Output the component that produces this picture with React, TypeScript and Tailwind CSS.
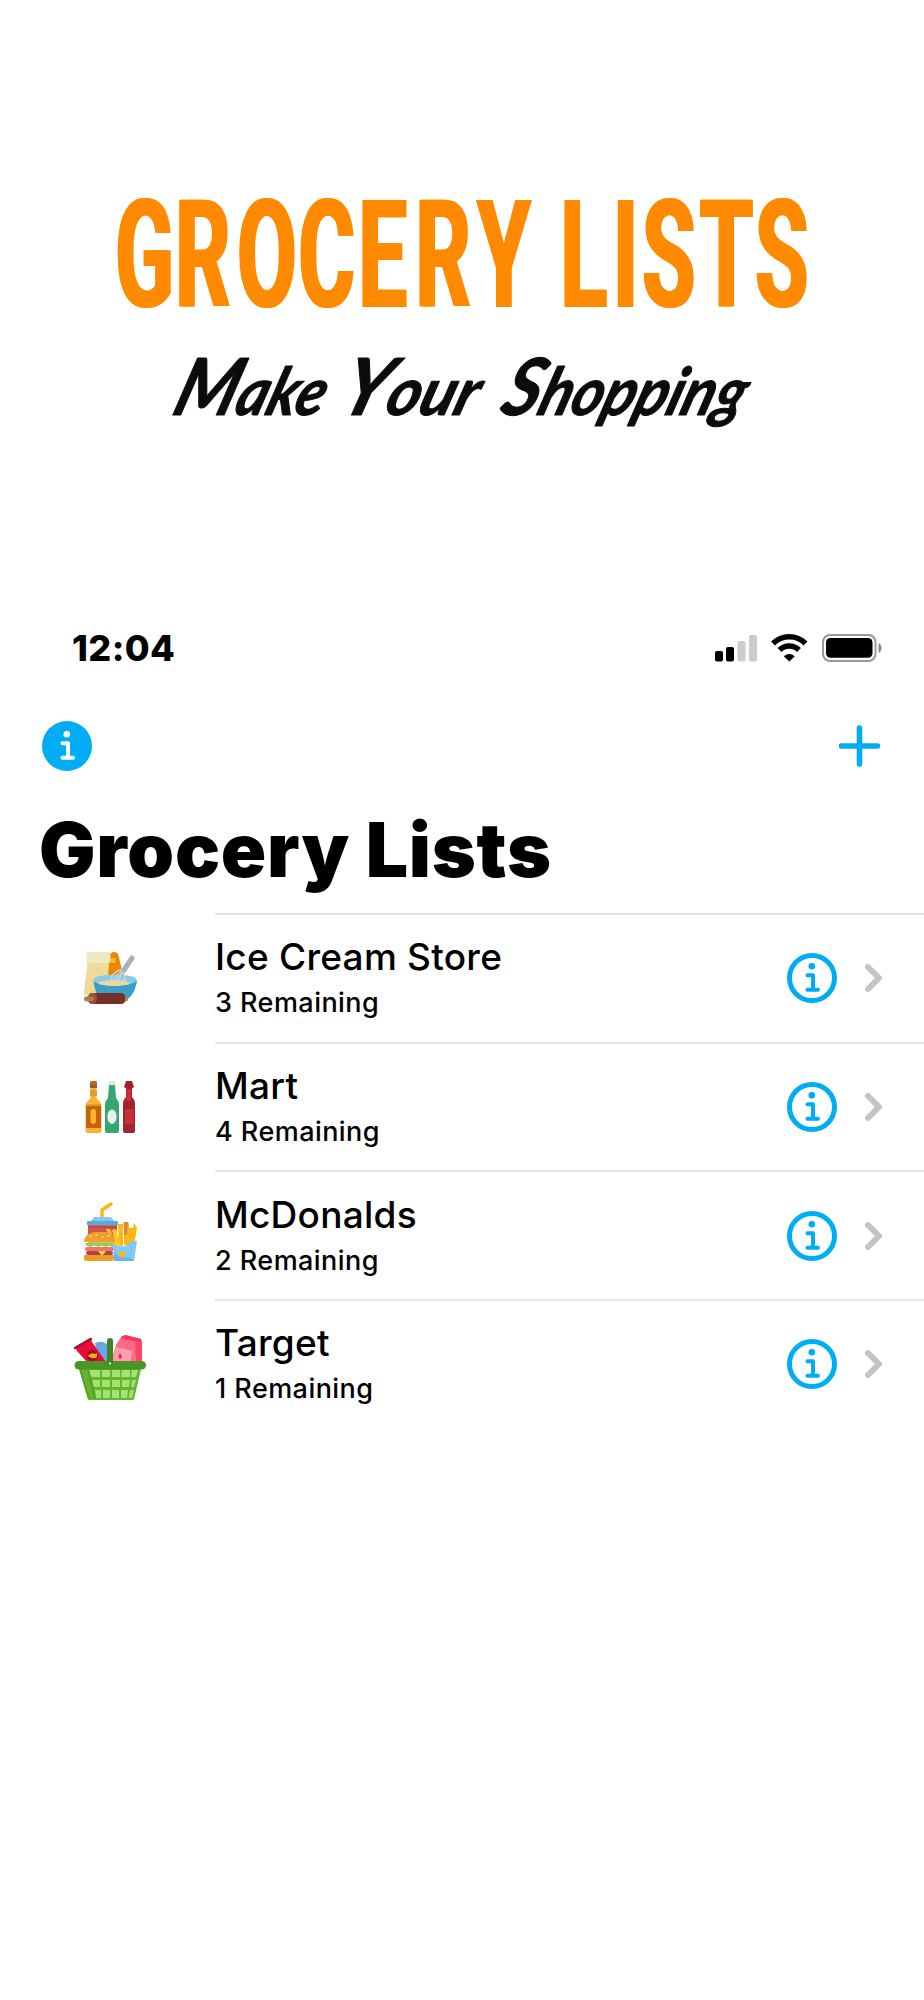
import type { ReactNode } from "react";

const BLUE = "#00adf5";

const BakingIcon = () => (
  <svg viewBox="0 0 100 100" className="w-[100px] h-[100px]">
    <path d="M50 24q4-4 8 0l6 24H47z" fill="#ea8500" />
    <path d="M28 30h21l-2 35H24z" fill="#eddb99" />
    <path d="M28 30l-4 33q2 4 8 2h14V32z" fill="#eddb99" />
    <rect x="26.500" y="22" width="24" height="11" rx="3" fill="#ebe8c2" />
    <rect x="50" y="28" width="5.500" height="5" fill="#f2bc2c" />
    <path d="M33.500 51c1 9 4 16 8 18h26c5-3 8-10 9.500-18z" fill="#399fc4" />
    <ellipse cx="55" cy="50" rx="21.700" ry="5.500" fill="#88cbe9" />
    <ellipse cx="54" cy="53" rx="15.500" ry="3" fill="#eddb99" />
    <path d="M50 53q1-11 12-14q5 4 1 14M54 53q1-9 9-13q-4 6-3 13M57 53q1-7 6-12M66 51l-4-10" stroke="#cbd5dc" strokeWidth="1.300" fill="none" />
    <path d="M64 40l8-12" stroke="#a5b1bb" strokeWidth="5" strokeLinecap="round" />
    <rect x="24" y="66.500" width="44" height="5" rx="2.500" fill="#b17d4f" />
    <rect x="28.500" y="63" width="36.500" height="11" rx="4" fill="#743029" />
    <path d="M32 63h3q4 5 0 11h-3q-4-1-4-5.500T32 63z" fill="#9a4d3d" />
    <rect x="25" y="66.500" width="9" height="4.500" rx="2.200" fill="#b17d4f" />
  </svg>
);

const BottlesIcon = () => (
  <svg viewBox="0 0 100 100" className="w-[100px] h-[100px]">
    <path d="M30.500 28h6v10l5 6v27q0 2-2 2h-12q-2 0-2-2V44l5-6z" fill="#f9b233" />
    <path d="M30 30h7v6h-7zM26 44h15v2H26z" fill="#dda02d" />
    <rect x="30" y="21" width="7" height="7" rx="1.500" fill="#c2650c" />
    <rect x="30" y="25" width="7" height="3" fill="#9c5a3c" />
    <rect x="26" y="46" width="15" height="22" fill="#c2650c" />
    <rect x="30.500" y="49" width="5.500" height="15" rx="2.700" fill="#f9b233" />
    <path d="M49 25h6l1 13q3 3 3 6v27q0 2-2 2H47q-2 0-2-2V44q0-3 3-6z" fill="#35a871" />
    <rect x="48" y="21" width="8" height="4" rx="1.500" fill="#e4e9ee" />
    <ellipse cx="52" cy="56.700" rx="4.600" ry="7.300" fill="#e9edf2" />
    <path d="M66 27h6v10q3 3 3 6v28q0 2-2 2h-8q-2 0-2-2V43q0-3 3-6z" fill="#9f262b" />
    <rect x="66.500" y="29" width="4.500" height="12" fill="#c92f35" />
    <path d="M66 21h6l2 6q-5 4-10 0z" fill="#a3202a" />
    <rect x="65" y="49" width="8.500" height="15" fill="#c92f35" />
  </svg>
);

const BurgerIcon = () => (
  <svg viewBox="0 0 100 100" className="w-[100px] h-[100px]">
    <path d="M42 33v-8l9-6" stroke="#fbb712" strokeWidth="3.500" strokeLinecap="round" strokeLinejoin="round" fill="none" />
    <path d="M34 32h17l3 4H31z" fill="#82c8f6" />
    <rect x="27" y="36" width="31" height="4.500" rx="1" fill="#5ca9d8" />
    <path d="M28 40.500h29v17H28z" fill="#d5524e" />
    <path d="M28 40.500h29v2H28z" fill="#b9463f" />
    <path d="M58 39h5v22h-4zM64 38h5v22h-5zM69 43h5v18h-5zM74 38l3 5-3 18h-4z" fill="#fbb712" />
    <path d="M63.500 37h4.500l-1 13h-3z" fill="#db873b" />
    <path d="M46 44l4 0 6 15h-4zM52 45l4-1 5 16h-5z" fill="#ffc928" />
    <path d="M24 57q1-10 12-10h8q11 0 11 10z" fill="#efa02e" />
    <path d="M30 51h1M36 50h1M42 52h1M48 51h1" stroke="#ffd37a" strokeWidth="1.500" strokeLinecap="round" />
    <path d="M25 58h29q1 3-2 4-3-2-6 0-4-2-8 0-4-3-7 0-6-1-6-4z" fill="#93d247" />
    <rect x="25" y="62" width="29" height="4" rx="2" fill="#f37371" />
    <rect x="26" y="66" width="27" height="4" rx="2" fill="#b24443" />
    <path d="M38 66h8l-4 5z" fill="#ffd52f" />
    <path d="M24 70h30v3q0 3-3 3H27q-3 0-3-3z" fill="#ec9b27" />
    <path d="M53 58q5 3 6 3 8 2 12-5h6l-3 20H54z" fill="#82c8f6" />
    <path d="M54 65q2 9 16 7l4 4H54z" fill="#6bb4e8" />
    <circle cx="62" cy="69.500" r="3" fill="#fbb712" />
  </svg>
);

const BasketIcon = () => (
  <svg viewBox="0 0 100 100" className="w-[100px] h-[100px]">
    <path d="M35 23q7-3 12 1l2 18H38z" fill="#64a8e8" />
    <path d="M15 27l15-9 2 4 14 20H27L17 31z" fill="#e60d37" />
    <path d="M15 28l16-9" stroke="#aa0d2c" strokeWidth="2.500" strokeLinecap="round" />
    <circle cx="32.500" cy="35.500" r="5.500" fill="#a30b29" />
    <path d="M28 36q3-4 7-2l2-1v4q-4 3-9-1z" fill="#ffb018" />
    <path d="M61 17l4-2 16 4 1 4-1 19H51l5-17z" fill="#ff6984" />
    <path d="M61 17l4-2 16 4 1 4-21-5z" fill="#f7355c" />
    <path d="M75 22l7 1v19h-6z" fill="#ff4468" />
    <path d="M56 27l17 4-3 11H52z" fill="#ff9fae" />
    <path d="M60 33q4 5 0 6-3-2 0-6z" fill="#e72b55" />
    <path d="M18 45h64l-8 34q0 1-2 1H30q-2 0-2-1z" fill="#65b52d" />
    <g fill="#a5e174">
      <path d="M29 50h11v7H31zM42 50h8v7h-8zM52 50h8v7h-8zM62 50h8v7h-9zM72 50h6l-2 7h-5z" />
      <path d="M32 60h8v7h-6zM42 60h8v7h-8zM52 60h8v7h-8zM62 60h8l-1 7h-7zM72 60h4l-2 7h-3z" />
      <path d="M35 70h6v8h-5zM43 70h7v8h-7zM52 70h7v8h-7zM61 70h7l-1 8h-6zM70 70h4l-2 8h-3z" />
    </g>
    <path d="M20 49l9 30M28 49l7 30" stroke="#55a127" strokeWidth="2" />
    <rect x="14.500" y="41" width="71.500" height="8.500" rx="4.200" fill="#4b9426" />
    <rect x="47" y="18" width="6" height="28" rx="3" fill="#3f8623" />
    <circle cx="50" cy="43.500" r="1.200" fill="#d4e7c8" />
  </svg>
);

const InfoIcon = ({ filled = false }: { filled?: boolean }) => {
  const mark = filled ? "#ffffff" : BLUE;
  return (
    <svg viewBox="0 0 50 50" className="w-[50px] h-[50px] shrink-0">
      {filled ? (
        <circle cx="25" cy="25" r="25" fill={BLUE} />
      ) : (
        <circle cx="25" cy="25" r="22.500" fill="none" stroke={BLUE} strokeWidth="5" />
      )}
      <circle cx="24.800" cy="13.200" r="3.300" fill={mark} />
      <path
        d="M20.500 22.300h5.500v14M20.500 36.700h10.500"
        fill="none"
        stroke={mark}
        strokeWidth="4"
        strokeLinecap="round"
        strokeLinejoin="round"
      />
    </svg>
  );
};

const StatusIcons = () => (
  <svg viewBox="0 0 168 30" className="w-[168px] h-[30px]">
    <rect x="1" y="18" width="8" height="10.500" rx="2" />
    <rect x="12" y="14" width="8" height="14.500" rx="2" />
    <rect x="23.500" y="8" width="8" height="20.500" rx="2" fill="#cccccc" />
    <rect x="35" y="2" width="8" height="26.500" rx="2" fill="#cccccc" />
    <g fill="none" stroke="#000">
      <path d="M59 10.500a23 23 0 0 1 32.500 0" strokeWidth="5.600" />
      <path d="M65.500 17a14 14 0 0 1 19.500 0" strokeWidth="5.400" />
    </g>
    <path d="M69.800 23.200q5.500-4.600 11 0L75.300 28.500z" />
    <rect x="109" y="2" width="52.500" height="26" rx="7" fill="none" stroke="#999999" strokeWidth="2" />
    <rect x="112" y="5" width="46.500" height="19.800" rx="4.500" />
    <path d="M164.500 10q3 1.500 3 5t-3 5z" fill="#888888" />
  </svg>
);

type GroceryList = { name: string; remaining: number; icon: ReactNode; offset: string };

const lists: GroceryList[] = [
  { name: "Ice Cream Store", remaining: 3, icon: <BakingIcon />, offset: "pt-[17px]" },
  { name: "Mart", remaining: 4, icon: <BottlesIcon />, offset: "pt-[18px]" },
  { name: "McDonalds", remaining: 2, icon: <BurgerIcon />, offset: "pt-[15px]" },
  { name: "Target", remaining: 1, icon: <BasketIcon />, offset: "pt-[21px]" },
];

const Wordmark = () => (
  <svg viewBox="0 0 924 480" className="block w-full h-[480px]">
    {/* the flat shadow widens the stems of the condensed caps */}
    <g style={{ filter: "drop-shadow(3.5px 0 0 #ff8a00)" }}>
      <text
        transform="scale(0.57 1)"
        x="199.500 304.800 413.500 521 626.300 726.300 834.500 939 980.700 1072.800 1124 1225 1322.500"
        y="307.500"
        fontFamily="Roboto, sans-serif"
        fontWeight="700"
        fontSize="151"
        fill="#ff8a00"
      >
        GROCERY LISTS
      </text>
    </g>
    <g
      fontFamily="Lato, sans-serif"
      fontWeight="700"
      fontStyle="italic"
      fontSize="66"
      fill="#0c0c0a"
      stroke="#0c0c0a"
      strokeWidth="1"
      strokeLinejoin="round"
      transform="translate(0 415) skewX(-18)"
    >
      <text x="170" y="0" textLength="150" lengthAdjust="spacingAndGlyphs">
        <tspan fontSize="79">M</tspan>ake
      </text>
      <text x="336" y="0" textLength="137" lengthAdjust="spacingAndGlyphs">
        <tspan fontSize="79">Y</tspan>our
      </text>
      <text x="498" y="0" textLength="242" lengthAdjust="spacingAndGlyphs">
        <tspan fontSize="79">S</tspan>hopping
      </text>
    </g>
  </svg>
);

const App = () => {
  return (
    <main
      className="w-full h-[2000px] bg-white text-black overflow-hidden"
      style={{ fontFamily: "Inter, sans-serif" }}
    >
      <Wordmark />

      {/* Status bar */}
      <div className="flex items-center justify-between pt-[153px] pl-[72px] pr-[42px]">
        <span className="text-[36px] leading-[30px] font-extrabold tracking-[0.4px]">12:04</span>
        <StatusIcons />
      </div>

      {/* Navigation */}
      <div className="flex items-center justify-between mt-[58px] pl-[42px] pr-[43px]">
        <InfoIcon filled />
        <svg viewBox="0 0 42 42" className="w-[42px] h-[42px]">
          <path d="M20.500 3v36M2.500 21h36" stroke={BLUE} strokeWidth="5.600" strokeLinecap="round" />
        </svg>
      </div>

      <h1 className="mt-[34px] pl-[39px] text-[75px] leading-[90px] font-black tracking-[0.75px]">
        Grocery Lists
      </h1>

      <ul className="mt-[18px]">
        {lists.map((list) => (
          <li key={list.name} className="flex h-[128.700px]">
            <div className={`w-[215px] pl-[60px] shrink-0 ${list.offset}`}>{list.icon}</div>
            <div className="flex flex-1 items-center border-t-2 border-[#e4e4e5] pr-[40px]">
              <div className="flex-1">
                <p className="pt-[2px] text-[37px] leading-[46px] font-medium tracking-[0.25px]">
                  {list.name}
                </p>
                <p className="mt-[2px] text-[27px] leading-[42px] font-medium tracking-[0.45px]">
                  {list.remaining} Remaining
                </p>
              </div>
              <InfoIcon />
              <svg viewBox="0 0 20 30" className="ml-[27px] w-[20px] h-[30px]">
                <path
                  d="M4 4l11 11L4 26"
                  fill="none"
                  stroke="#c4c4c6"
                  strokeWidth="6"
                  strokeLinecap="round"
                  strokeLinejoin="round"
                />
              </svg>
            </div>
          </li>
        ))}
      </ul>
    </main>
  );
};

export default App;
